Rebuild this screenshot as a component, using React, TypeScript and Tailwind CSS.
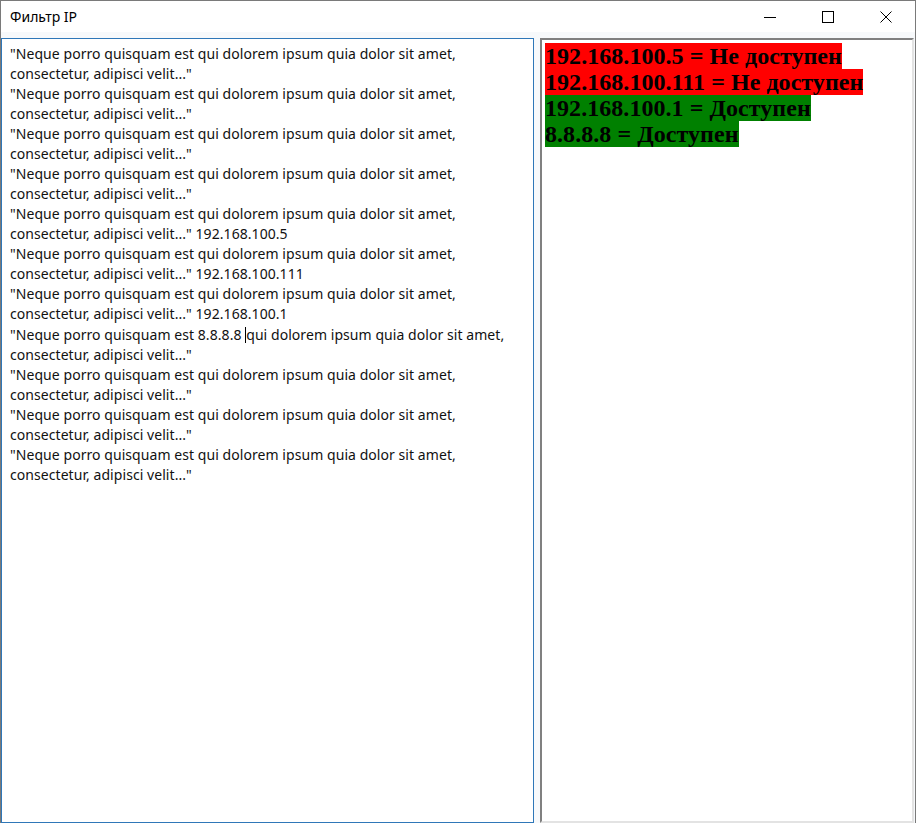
const lorem1 = '"Neque porro quisquam est qui dolorem ipsum quia dolor sit amet,';
const lorem2 = 'consectetur, adipisci velit..."';

const leftLines: { a: string; b: string; caret?: boolean }[] = [
  { a: lorem1, b: lorem2 },
  { a: lorem1, b: lorem2 },
  { a: lorem1, b: lorem2 },
  { a: lorem1, b: lorem2 },
  { a: lorem1, b: lorem2 + " 192.168.100.5" },
  { a: lorem1, b: lorem2 + " 192.168.100.111" },
  { a: lorem1, b: lorem2 + " 192.168.100.1" },
  { a: "", b: lorem2, caret: true },
  { a: lorem1, b: lorem2 },
  { a: lorem1, b: lorem2 },
  { a: lorem1, b: lorem2 },
];

const results = [
  { ip: "192.168.100.5", ok: false },
  { ip: "192.168.100.111", ok: false },
  { ip: "192.168.100.1", ok: true },
  { ip: "8.8.8.8", ok: true },
];

const App = () => {
  return (
    <div className="flex h-[823px] w-[916px] flex-col overflow-hidden border-x border-t border-[#7a7a7a] bg-[#f7f9fb]">
      <div className="flex h-[31px] shrink-0 items-center justify-between bg-white">
        <span className="pl-[9px] text-[14px] text-black [font-family:'Noto_Sans',sans-serif]">
          Фильтр IP
        </span>
        <div className="flex h-full">
          <div className="flex w-[58px] items-center justify-center">
            <svg width="12" height="12" viewBox="0 0 12 12">
              <line x1="0" y1="6.5" x2="12" y2="6.5" stroke="#000" strokeWidth="1" />
            </svg>
          </div>
          <div className="flex w-[58px] items-center justify-center">
            <svg width="12" height="12" viewBox="0 0 12 12">
              <rect x="0.5" y="0.5" width="11" height="11" fill="none" stroke="#000" strokeWidth="1" />
            </svg>
          </div>
          <div className="flex w-[58px] items-center justify-center">
            <svg width="12" height="12" viewBox="0 0 12 12">
              <path d="M0.5 0.5 L11.5 11.5 M11.5 0.5 L0.5 11.5" stroke="#000" strokeWidth="1" />
            </svg>
          </div>
        </div>
      </div>

      <div className="flex flex-1 gap-[6px] pt-[6px]">
        <div className="h-full w-[533px] shrink-0 border border-[#2f77b8] bg-white px-[8px] pt-[5px]">
          <div className="whitespace-nowrap text-[14px] leading-[20px] tracking-[0.06px] text-[#111] [font-family:'Noto_Sans',sans-serif]">
            {leftLines.map((l, i) => (
              <div key={i}>
                <div>
                  {l.caret ? (
                    <>
                      "Neque porro quisquam est 8.8.8.8{" "}
                      <span className="inline-block h-[16px] w-px translate-y-[3px] bg-black" />
                      qui dolorem ipsum quia dolor sit amet,
                    </>
                  ) : (
                    l.a
                  )}
                </div>
                <div>{l.b}</div>
              </div>
            ))}
          </div>
        </div>

        <div className="h-full w-[374px] shrink-0 border-2 border-b-[#e3e3e3] border-l-[#808080] border-r-[#e3e3e3] border-t-[#808080] bg-white pl-[3px] pt-[3px]">
          <div className="text-[24px] font-bold leading-[26px] tracking-[0.05px] text-black [font-family:'Liberation_Serif',serif]">
            {results.map((r) => (
              <div
                key={r.ip}
                className={r.ok ? "w-fit whitespace-nowrap bg-[#008000]" : "w-fit whitespace-nowrap bg-[#ff0000]"}
              >
                {r.ip} = {r.ok ? "Доступен" : "Не доступен"}
              </div>
            ))}
          </div>
        </div>
      </div>
    </div>
  );
};

export default App;
